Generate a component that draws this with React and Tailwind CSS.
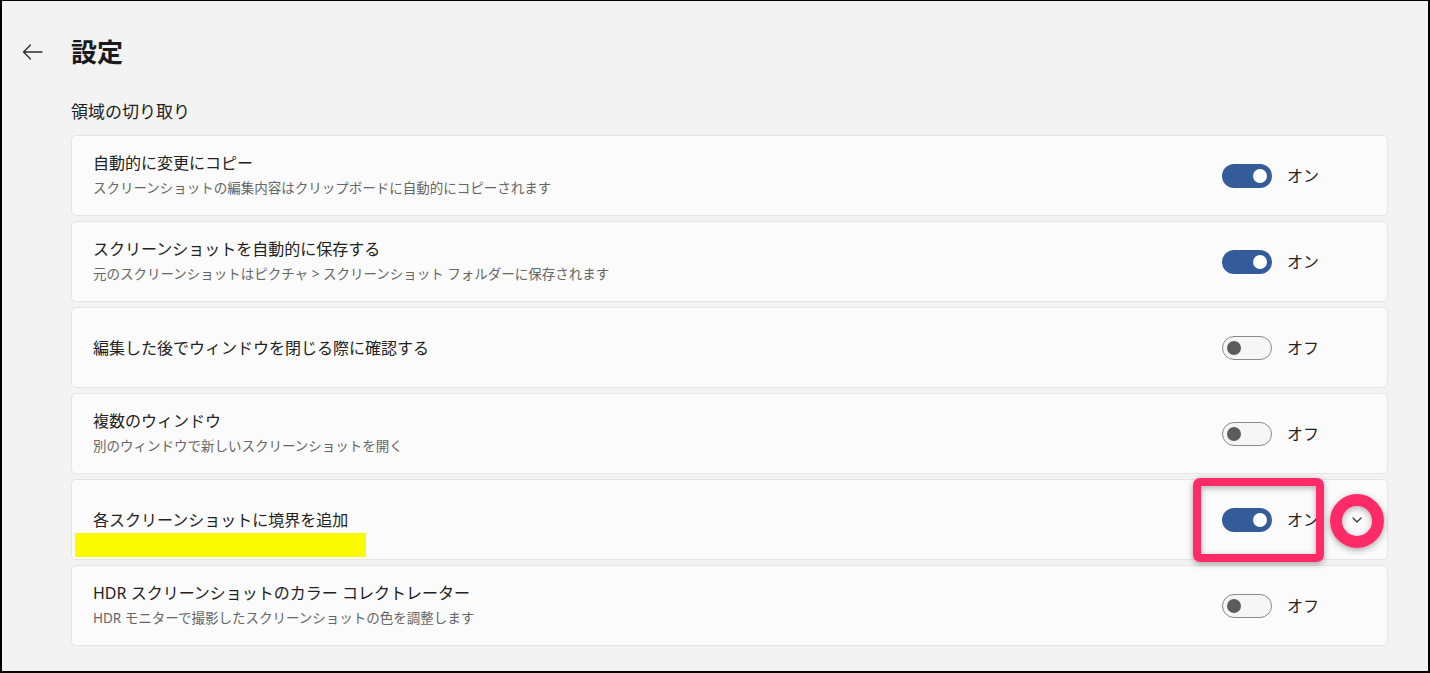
import React from "react";

const rows = [
  { t: "自動的に変更にコピー", s: "スクリーンショットの編集内容はクリップボードに自動的にコピーされます", on: true },
  { t: "スクリーンショットを自動的に保存する", s: "元のスクリーンショットはピクチャ > スクリーンショット フォルダーに保存されます", on: true },
  { t: "編集した後でウィンドウを閉じる際に確認する", s: null, on: false },
  { t: "複数のウィンドウ", s: "別のウィンドウで新しいスクリーンショットを開く", on: false },
  { t: "各スクリーンショットに境界を追加", s: null, on: true, chevron: true },
  { t: "HDR スクリーンショットのカラー コレクトレーター", s: "HDR モニターで撮影したスクリーンショットの色を調整します", on: false },
];

function Toggle({ on }) {
  if (on) {
    return (
      <div className="relative h-6 w-[50px] shrink-0 rounded-full bg-[#345c9b]">
        <div className="absolute right-[5px] top-[5px] h-[14px] w-[14px] rounded-full bg-white" />
      </div>
    );
  }
  return (
    <div className="relative h-6 w-[50px] shrink-0 rounded-full border border-[#8a8a8a] bg-[#f6f6f6]">
      <div className="absolute left-[4px] top-[4px] h-[14px] w-[14px] rounded-full bg-[#5c5c5c]" />
    </div>
  );
}

export default function App() {
  return (
    <div
      className="relative h-[673px] w-[1430px] overflow-hidden bg-[#f3f3f3] shadow-[inset_2px_1px_0_#000,inset_-2px_-2px_0_#000]"
      style={{ fontFamily: '"Noto Sans", "Noto Sans CJK JP", sans-serif' }}
    >
      <div className="mt-[33px] flex h-[38px] items-center">
        <div className="ml-[22px] flex w-[49px] items-center">
          <svg width="21" height="16" viewBox="0 0 21 16" fill="none">
            <path d="M20 8H1.5M8.5 1L1.5 8l7 7" stroke="#2b2b2b" strokeWidth="1.3" strokeLinecap="round" strokeLinejoin="round" />
          </svg>
        </div>
        <div className="text-[26px] font-bold leading-[38px] text-[#1b1b1b]">設定</div>
      </div>

      <div className="ml-[71px] mt-[30px] text-[17px] leading-[22px] text-[#222]">領域の切り取り</div>

      <div className="ml-[71px] mt-[12px] flex w-[1317px] flex-col gap-[5px]">
        {rows.map((r, i) => (
          <div
            key={i}
            className="flex h-[81px] items-center rounded-[5px] border border-[#e5e5e5] bg-[#fbfbfb] pl-[21px]"
          >
            <div className="flex min-w-0 flex-1 flex-col">
              <div className="text-[16px] leading-[24px] text-[#222]">{r.t}</div>
              {r.s && <div className="text-[13.5px] leading-[26px] text-[#666]">{r.s}</div>}
            </div>
            <Toggle on={r.on} />
            <div className="ml-[15px] w-[40px] text-[16px] leading-[24px] text-[#222]">{r.on ? "オン" : "オフ"}</div>
            <div className="flex w-[60px] items-center justify-center">
              {r.chevron && (
                <svg width="10" height="6" viewBox="0 0 10 6" fill="none">
                  <path d="M1 1l4 4 4-4" stroke="#333" strokeWidth="1.2" strokeLinecap="round" strokeLinejoin="round" />
                </svg>
              )}
            </div>
          </div>
        ))}
      </div>

      {/* annotations */}
      <div className="absolute left-[75px] top-[533px] h-[24px] w-[291px] bg-[#fafa00]" />
      <div className="absolute left-[1193px] top-[478px] h-[84px] w-[131px] rounded-[7px] border-[8px] border-[#ff2a68] shadow-[0_2px_6px_rgba(0,0,0,0.35),inset_0_2px_6px_rgba(0,0,0,0.3)]" />
      <div className="absolute left-[1330px] top-[494px] h-[54px] w-[54px] rounded-full border-[12px] border-[#ff2a68] shadow-[0_2px_6px_rgba(0,0,0,0.35),inset_0_2px_6px_rgba(0,0,0,0.3)]" />
    </div>
  );
}
